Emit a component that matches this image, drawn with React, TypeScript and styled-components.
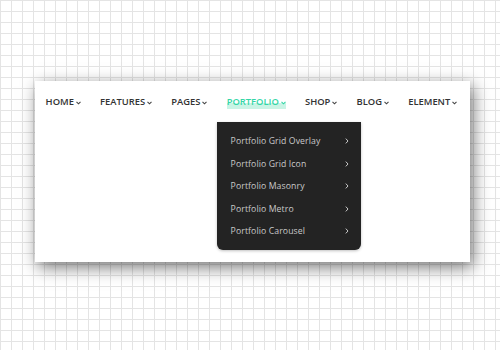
import React from "react";
import styled, { createGlobalStyle } from "styled-components";

const Global = createGlobalStyle`
  html, body { margin: 0; padding: 0; }
  body {
    width: 500px;
    height: 350px;
    overflow: hidden;
    background-color: #fff;
    background-image:
      linear-gradient(to right, #e4e4e4 1px, transparent 1px),
      linear-gradient(to bottom, #e4e4e4 1px, transparent 1px);
    background-size: 11px 11px;
    background-position: 0 0;
  }
`;

const Page = styled.div`
  padding: 81px 0 0 35px;
`;

const Card = styled.div`
  width: 435px;
  height: 181px;
  background: #fff;
  box-shadow: 3px 5px 16px rgba(0, 0, 0, 0.55);
`;

const Nav = styled.nav`
  display: flex;
  padding-left: 1px;
`;

const Item = styled.div`
  position: relative;
  height: 41px;
  padding: 10px 9.6px 0;
  box-sizing: border-box;
`;

const Label = styled.span<{ $active?: boolean }>`
  display: inline-flex;
  align-items: center;
  font-family: "Open Sans", "Liberation Sans", sans-serif;
  font-weight: 600;
  font-size: 9.4px;
  line-height: 12px;
  color: ${(p) => (p.$active ? "#33d6a6" : "#333")};
  background: ${(p) =>
    p.$active
      ? "linear-gradient(to bottom, transparent 52%, #c8f4e5 52%)"
      : "none"};
  padding-bottom: ${(p) => (p.$active ? "1px" : "0")};
`;

const Chevron = styled.svg`
  margin-left: 2px;
  margin-top: 1px;
`;

const Dropdown = styled.div`
  position: absolute;
  top: 100%;
  left: -0.5px;
  width: 144px;
  box-sizing: border-box;
  padding: 8px 0 7px;
  background: #232323;
  border-radius: 0 0 6px 6px;
  box-shadow: 0 1px 3px rgba(0, 0, 0, 0.25);
  z-index: 2;
`;

const DropItem = styled.div`
  height: 22.5px;
  display: flex;
  align-items: center;
  justify-content: space-between;
  padding: 0 12px 0 14px;
  font-family: "Open Sans", "Liberation Sans", sans-serif;
  font-size: 8.7px;
  color: #c9c9c9;
  letter-spacing: 0.1px;
`;

const Arrow = styled.svg`
  flex: none;
`;

const navItems = ["HOME", "FEATURES", "PAGES", "PORTFOLIO", "SHOP", "BLOG", "ELEMENT"];
const dropItems = [
  "Portfolio Grid Overlay",
  "Portfolio Grid Icon",
  "Portfolio Masonry",
  "Portfolio Metro",
  "Portfolio Carousel",
];

const Down = ({ color }: { color: string }) => (
  <Chevron width="5" height="4" viewBox="0 0 5 4">
    <path d="M0.5 0.8 L2.5 2.8 L4.5 0.8" fill="none" stroke={color} strokeWidth="1.1" />
  </Chevron>
);

export default function App() {
  return (
    <>
      <Global />
      <Page>
        <Card>
          <Nav>
            {navItems.map((n) => {
              const active = n === "PORTFOLIO";
              return (
                <Item key={n}>
                  <Label $active={active}>
                    {n}
                    <Down color={active ? "#33d6a6" : "#444"} />
                  </Label>
                  {active && (
                    <Dropdown>
                      {dropItems.map((d) => (
                        <DropItem key={d}>
                          {d}
                          <Arrow width="4" height="6" viewBox="0 0 4 6">
                            <path d="M0.8 0.6 L3 3 L0.8 5.4" fill="none" stroke="#c9c9c9" strokeWidth="1" />
                          </Arrow>
                        </DropItem>
                      ))}
                    </Dropdown>
                  )}
                </Item>
              );
            })}
          </Nav>
        </Card>
      </Page>
    </>
  );
}
